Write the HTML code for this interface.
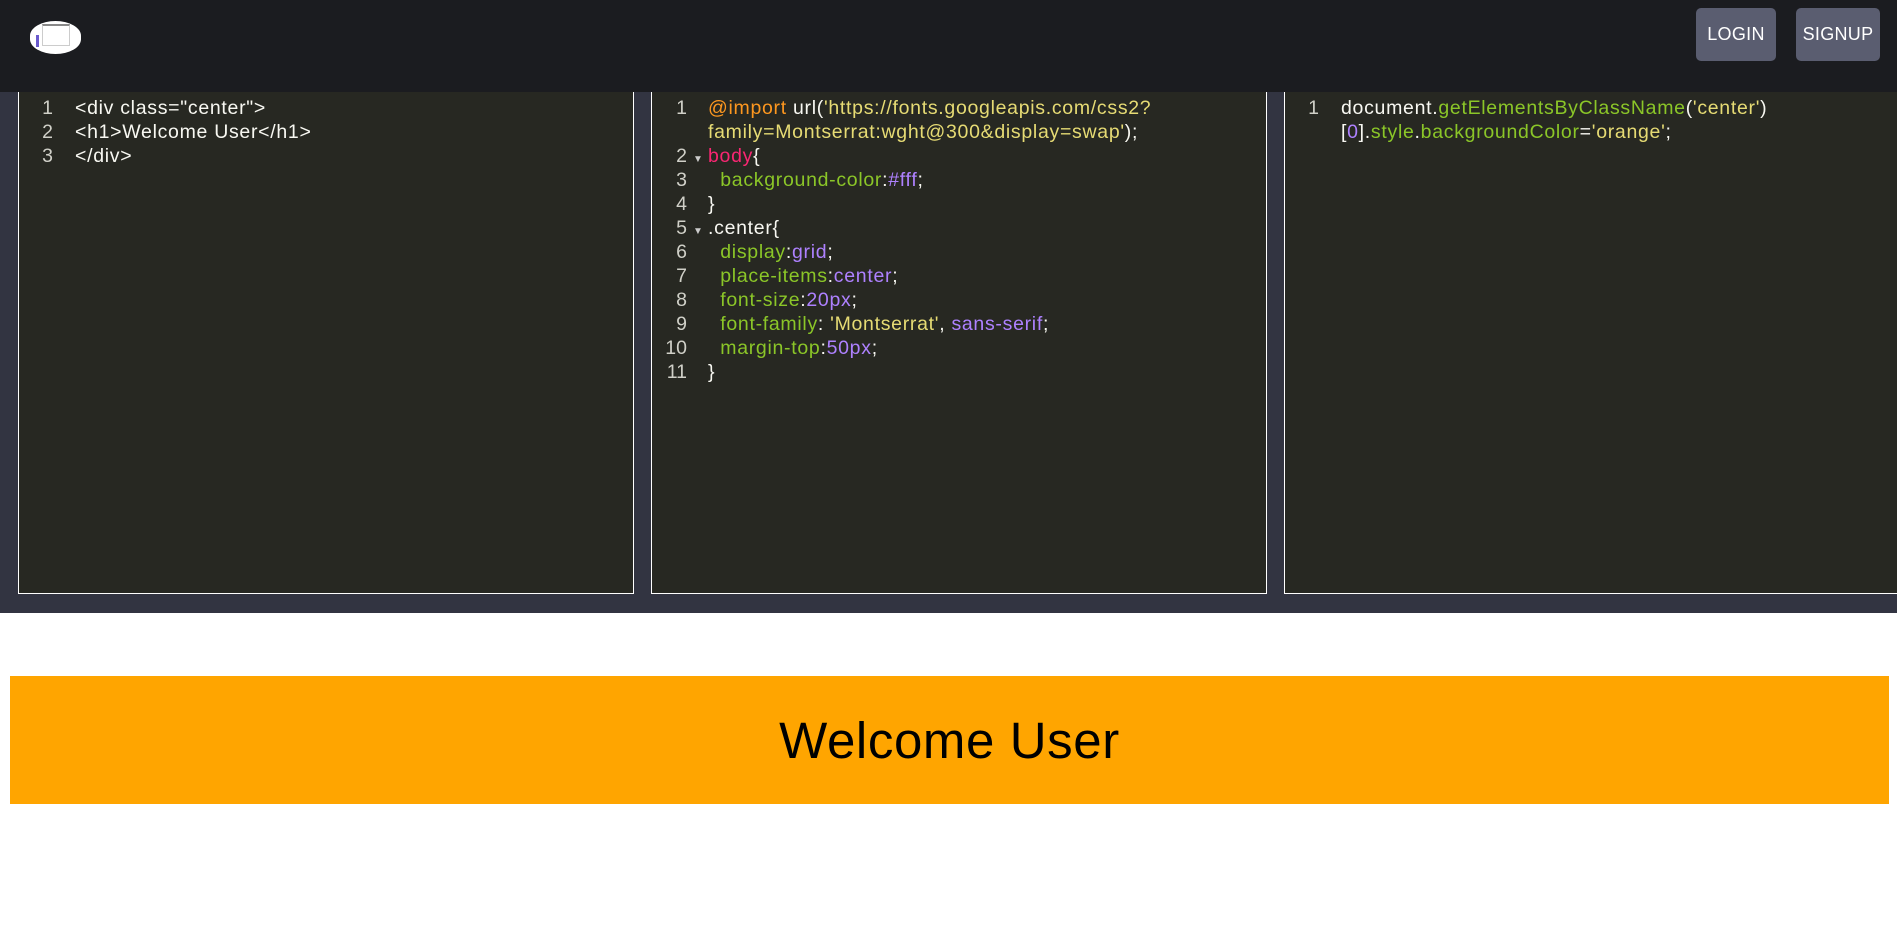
<!DOCTYPE html>
<html><head><meta charset="utf-8"><style>
*{margin:0;padding:0;box-sizing:border-box}
html,body{width:1897px;height:942px;overflow:hidden;background:#fff;font-family:"Liberation Sans",sans-serif}
.nav{position:absolute;left:0;top:0;width:1897px;height:92px;background:#1b1c20}
.logo{position:absolute;left:30px;top:21px;width:51px;height:33px;background:#fff;border-radius:50%/45%}
.logo i{position:absolute;left:12px;top:3px;width:28px;height:22px;border:1px solid #ccc;border-top:2px solid #888}
.logo b{position:absolute;left:6px;top:14px;width:3px;height:12px;background:#6a5acd}
.btn{position:absolute;top:8px;height:53px;background:#5a5d70;border-radius:5px;color:#fff;font-size:18px;display:flex;align-items:center;justify-content:center;letter-spacing:.3px}
.ed{position:absolute;left:0;top:92px;width:1897px;height:521px;background:#323441}
.p{position:absolute;top:92px;height:502px;background:#272822;border:1px solid #fff;border-top:none;overflow:hidden}
.code{position:absolute;top:4px;font-size:19.5px;line-height:24px;color:#f8f8f2;white-space:pre;letter-spacing:.7px}
.num{position:absolute;top:4px;font-size:19.5px;line-height:24px;color:#d0d0c8;text-align:right;white-space:pre}
.ar{position:absolute;font-size:10px;color:#ccc}
.o{color:#fd971f}.y{color:#e6db74}.k{color:#f92672}.g{color:#8bc628}.v{color:#ae81ff}
.ban{position:absolute;left:10px;top:676px;width:1879px;height:128px;background:#ffa500;display:flex;align-items:center;justify-content:center;font-size:51px;color:#000;letter-spacing:.6px}
</style></head><body>
<div class="nav"><div class="logo"><i></i><b></b></div>
<div class="btn" style="left:1696px;width:80px">LOGIN</div>
<div class="btn" style="left:1796px;width:84px">SIGNUP</div></div>
<div class="ed"></div>
<div class="p" style="left:18px;width:616px">
<div class="num" style="left:0;width:34px">1
2
3</div>
<div class="code" style="left:56px">&lt;div class="center"&gt;
&lt;h1&gt;Welcome User&lt;/h1&gt;
&lt;/div&gt;</div></div>
<div class="p" style="left:651px;width:616px">
<div class="num" style="left:0;width:35px">1

2
3
4
5
6
7
8
9
10
11</div>
<div class="ar" style="left:41px;top:62px">▼</div>
<div class="ar" style="left:41px;top:134px">▼</div>
<div class="code" style="left:56px"><span class="o">@import</span> url(<span class="y">'https://fonts.googleapis.com/css2?</span>
<span class="y">family=Montserrat:wght@300&amp;display=swap'</span>);
<span class="k">body</span>{
  <span class="g">background-color</span>:<span class="v">#fff</span>;
}
.center{
  <span class="g">display</span>:<span class="v">grid</span>;
  <span class="g">place-items</span>:<span class="v">center</span>;
  <span class="g">font-size</span>:<span class="v">20px</span>;
  <span class="g">font-family</span>: <span class="y">'Montserrat'</span>, <span class="v">sans-serif</span>;
  <span class="g">margin-top</span>:<span class="v">50px</span>;
}</div></div>
<div class="p" style="left:1284px;width:640px">
<div class="num" style="left:0;width:34px">1</div>
<div class="code" style="left:56px">document.<span class="g">getElementsByClassName</span>(<span class="y">'center'</span>)
[<span class="v">0</span>].<span class="g">style</span>.<span class="g">backgroundColor</span>=<span class="y">'orange'</span>;</div></div>
<div class="ban">Welcome User</div>
</body></html>
